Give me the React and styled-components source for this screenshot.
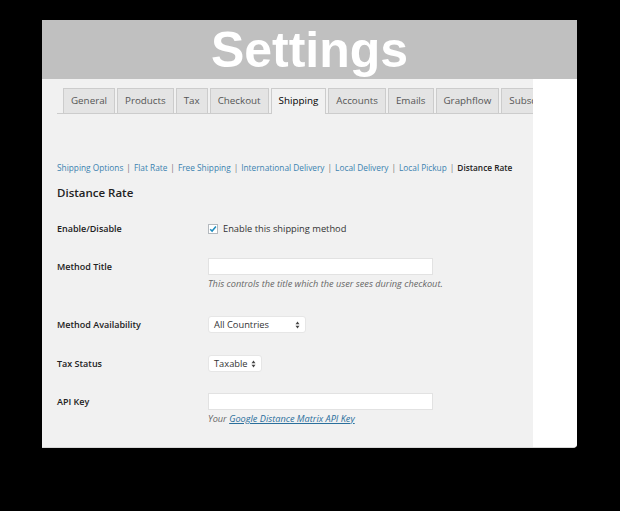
import React from "react";
import styled, { createGlobalStyle } from "styled-components";

const GlobalStyle = createGlobalStyle`
  html, body {
    margin: 0;
    padding: 0;
    background: #000;
  }
  body {
    font-family: "Open Sans", "Noto Sans", sans-serif;
  }
`;

const StStage = styled.div`
  width: 620px;
  height: 511px;
  padding: 20px 0 0 42px;
  box-sizing: border-box;
  background: #000;
`;

const StWindow = styled.div`
  width: 535px;
  height: 428px;
  display: flex;
  flex-direction: column;
  border-bottom-right-radius: 4px;
  overflow: hidden;
  background: #fff;
  border-bottom: 1px solid #d8d8d8;
  box-sizing: border-box;
`;

const StBanner = styled.div`
  height: 59px;
  flex-shrink: 0;
  background: #c0c0c0;
  color: #fff;
  text-align: center;
  font-family: "Liberation Sans", Arial, sans-serif;
  font-weight: bold;
  font-size: 50px;
  line-height: 61px;
`;

const StBody = styled.div`
  flex: 1;
  display: flex;
`;

const StMain = styled.div`
  width: 491px;
  flex-shrink: 0;
  background: #f1f1f1;
  overflow: hidden;
  padding-left: 15px;
  box-sizing: border-box;
`;

const StSide = styled.div`
  flex: 1;
  background: #fff;
`;

const StTabBar = styled.div`
  display: flex;
  gap: 2px;
  margin-top: 9px;
  padding-left: 6px;
  border-bottom: 1px solid #ccc;
  height: 25px;
  white-space: nowrap;
`;

const StTab = styled.span`
  flex-shrink: 0;
  height: ${(p) => (p.$active ? 26 : 25)}px;
  box-sizing: border-box;
  padding: 0 7px;
  line-height: 24px;
  font-size: 9.8px;
  border: 1px solid #ccc;
  border-bottom: none;
  background: ${(p) => (p.$active ? "#f1f1f1" : "#e4e4e4")};
  color: ${(p) => (p.$active ? "#000" : "#555")};
  font-weight: ${(p) => (p.$active ? 500 : 400)};
`;

const StSubNav = styled.div`
  margin-top: 48px;
  font-size: 8.3px;
  line-height: 12px;
  color: #777;
  white-space: nowrap;
`;

const StSubLink = styled.span`
  color: ${(p) => (p.$current ? "#222" : "#3b82b0")};
  font-weight: ${(p) => (p.$current ? 600 : 400)};
`;

const StSep = styled.span`
  margin: 0 3px;
`;

const StHeading = styled.div`
  margin-top: 11px;
  font-size: 11.5px;
  line-height: 16px;
  font-weight: 600;
  color: #222;
`;

const StTable = styled.div`
  margin-top: 8px;
`;

const StRow = styled.div`
  display: grid;
  grid-template-columns: 151px 1fr;
  align-items: start;
  padding: ${(p) => p.$top ?? 11}px 0 11px;
`;

const StLabel = styled.div`
  font-size: 9px;
  font-weight: 600;
  line-height: 17px;
  color: #222;
`;

const StField = styled.div`
  display: flex;
  flex-direction: column;
  align-items: flex-start;
`;

const StCheckLine = styled.div`
  display: flex;
  align-items: center;
  height: 17px;
  font-size: 9.3px;
  color: #333;
`;

const StCheckbox = styled.span`
  width: 10px;
  height: 10px;
  box-sizing: border-box;
  border: 1px solid #b4b9be;
  background: #fff;
  margin-right: 5px;
  display: flex;
  align-items: center;
  justify-content: center;
`;

const StInput = styled.div`
  width: 225px;
  height: 17px;
  box-sizing: border-box;
  background: #fff;
  border: 1px solid #e2e2e2;
`;

const StSelect = styled.div`
  width: ${(p) => p.$width}px;
  height: 17px;
  box-sizing: border-box;
  background: #fff;
  border-radius: 3px;
  border: 1px solid #e6e6e6;
  display: flex;
  align-items: center;
  justify-content: space-between;
  padding: 0 5px;
  font-size: 9.3px;
  color: #333;
`;

const StDesc = styled.div`
  margin-top: 3px;
  margin-bottom: 4px;
  font-size: 9.2px;
  line-height: 12px;
  font-style: italic;
  color: #666;
`;

const StDescLink = styled.span`
  color: #2a6f9c;
  text-decoration: underline;
`;

const Arrows = () => (
  <svg width="5" height="8" viewBox="0 0 5 8">
    <path d="M2.5 0.5 L4.5 3.2 L0.5 3.2 Z" fill="#444" />
    <path d="M2.5 7.5 L4.5 4.8 L0.5 4.8 Z" fill="#444" />
  </svg>
);

const Check = () => (
  <svg width="8" height="8" viewBox="0 0 8 8">
    <path
      d="M1.2 4.2 L3.1 6.1 L6.9 1.5"
      fill="none"
      stroke="#1e8cbe"
      strokeWidth="1.5"
    />
  </svg>
);

const tabs = [
  "General",
  "Products",
  "Tax",
  "Checkout",
  "Shipping",
  "Accounts",
  "Emails",
  "Graphflow",
  "Subscriptions",
];

const links = [
  "Shipping Options",
  "Flat Rate",
  "Free Shipping",
  "International Delivery",
  "Local Delivery",
  "Local Pickup",
];

export default function App() {
  return (
    <StStage>
      <GlobalStyle />
      <StWindow>
        <StBanner>Settings</StBanner>
        <StBody>
          <StMain>
            <StTabBar>
              {tabs.map((t) => (
                <StTab key={t} $active={t === "Shipping"}>
                  {t}
                </StTab>
              ))}
            </StTabBar>

            <StSubNav>
              {links.map((l) => (
                <React.Fragment key={l}>
                  <StSubLink>{l}</StSubLink>
                  <StSep>|</StSep>
                </React.Fragment>
              ))}
              <StSubLink $current>Distance Rate</StSubLink>
            </StSubNav>

            <StHeading>Distance Rate</StHeading>

            <StTable>
              <StRow>
                <StLabel>Enable/Disable</StLabel>
                <StField>
                  <StCheckLine>
                    <StCheckbox>
                      <Check />
                    </StCheckbox>
                    Enable this shipping method
                  </StCheckLine>
                </StField>
              </StRow>
              <StRow $top={10}>
                <StLabel>Method Title</StLabel>
                <StField>
                  <StInput />
                  <StDesc>
                    This controls the title which the user sees during checkout.
                  </StDesc>
                </StField>
              </StRow>
              <StRow>
                <StLabel>Method Availability</StLabel>
                <StField>
                  <StSelect $width={98}>
                    All Countries
                    <Arrows />
                  </StSelect>
                </StField>
              </StRow>
              <StRow>
                <StLabel>Tax Status</StLabel>
                <StField>
                  <StSelect $width={54}>
                    Taxable
                    <Arrows />
                  </StSelect>
                </StField>
              </StRow>
              <StRow $top={10}>
                <StLabel>API Key</StLabel>
                <StField>
                  <StInput />
                  <StDesc>
                    Your <StDescLink>Google Distance Matrix API Key</StDescLink>
                  </StDesc>
                </StField>
              </StRow>
            </StTable>
          </StMain>
          <StSide />
        </StBody>
      </StWindow>
    </StStage>
  );
}
